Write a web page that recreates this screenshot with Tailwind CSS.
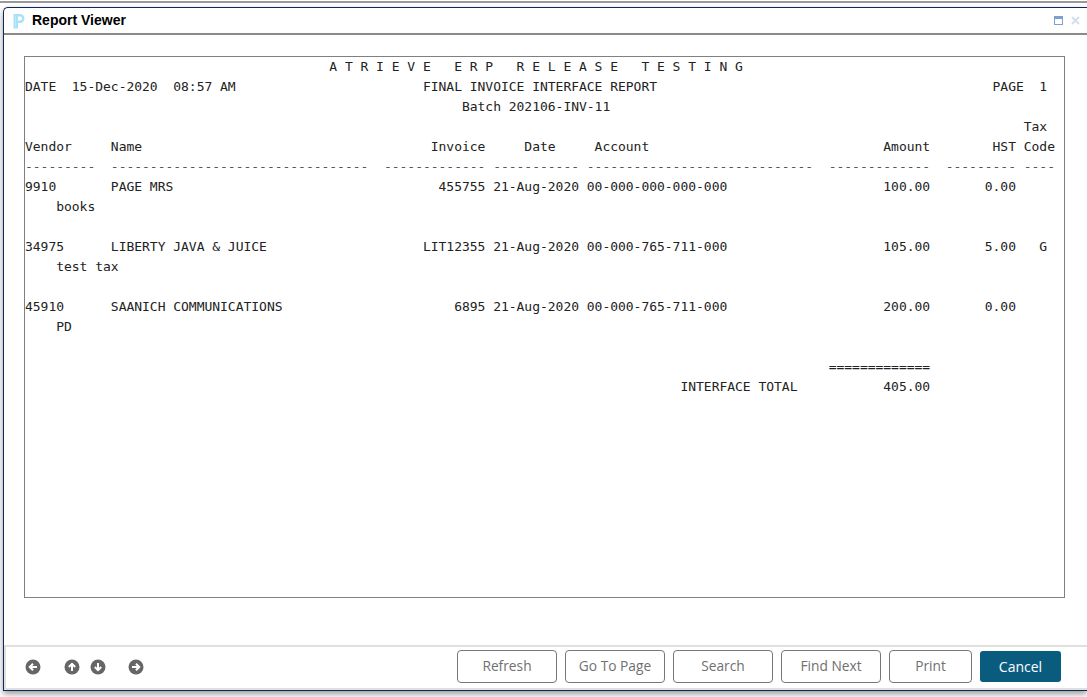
<!DOCTYPE html>
<html lang="en">
  <head>
    <meta charset="UTF-8" />
    <title>Report Viewer</title>
    <script src="https://cdn.jsdelivr.net/npm/@tailwindcss/browser@4"></script>
  </head>
  <body class="bg-white">
    <div class="h-[697px] w-[1087px] overflow-hidden flex flex-col pt-px">
      <div class="h-[2px] bg-[#999999] shrink-0"></div>
      <!-- window -->
      <div class="mt-1 ml-[3px] h-[684px] flex flex-col border-l border-t border-b border-[#0b2a5b] rounded-tl-[5px] shadow-[0_3px_6px_rgba(0,0,0,0.4)] bg-white">
        <!-- title bar -->
        <div class="h-[27px] shrink-0 flex items-center border-b-[2px] border-[#8a8a8a] pl-[9px] pr-[7px]">
          <svg width="12" height="16" viewBox="0 0 12 16" class="shrink-0">
            <path d="M0.5 1h6.5a4.5 4.5 0 0 1 0 9H5v5.5H0.5z" fill="#a6e3fb" />
            <path d="M2.5 3.5v10" stroke="#bdeafc" stroke-width="1" />
            <path d="M5 3.5h2a2 2 0 0 1 0 4H5z" fill="#ffffff" />
          </svg>
          <span class="ml-[7px] text-[14px] font-bold text-black font-['Liberation_Sans',sans-serif]">Report Viewer</span>
          <div class="ml-auto flex items-center gap-2">
            <div class="w-[9px] h-[9px] border border-[#7f9fcf] border-t-[3px]"></div>
            <svg width="9" height="9" viewBox="0 0 9 9"><path d="M1 1l7 7M8 1l-7 7" stroke="#d3dff0" stroke-width="2" /></svg>
          </div>
        </div>
        <!-- report -->
        <div class="flex-1 min-h-0 pt-[21px] pl-[20px] pr-[22px]">
          <div class="h-[542px] border border-[#808080] overflow-hidden">
<pre class="font-['DejaVu_Sans_Mono',monospace] text-[13px] tracking-[-0.024px] leading-[20px] text-[#222222]">                                       A T R I E V E   E R P   R E L E A S E   T E S T I N G
DATE  15-Dec-2020  08:57 AM                        FINAL INVOICE INTERFACE REPORT                                           PAGE  1
                                                        Batch 202106-INV-11
                                                                                                                                Tax
Vendor     Name                                     Invoice     Date     Account                              Amount        HST Code
<span class="text-[#555555]">---------  ---------------------------------  ------------- ----------- -----------------------------  -------------  --------- ----</span>
9910       PAGE MRS                                  455755 21-Aug-2020 00-000-000-000-000                    100.00       0.00
    books

34975      LIBERTY JAVA &amp; JUICE                    LIT12355 21-Aug-2020 00-000-765-711-000                    105.00       5.00   G
    test tax

45910      SAANICH COMMUNICATIONS                      6895 21-Aug-2020 00-000-765-711-000                    200.00       0.00
    PD

                                                                                                       =============
                                                                                    INTERFACE TOTAL           405.00</pre>
          </div>
        </div>
        <!-- footer -->
        <div class="h-[45px] shrink-0 border-t-[2px] border-l-[2px] border-b-[2px] border-[#e0e0e0] flex items-center pl-[19px] pr-[26px] pb-[2px]">
          <div class="flex items-center">
            <svg width="16" height="16" viewBox="0 0 16 16"><circle cx="8" cy="8" r="7.5" fill="#666666" /><path d="M12 8H5M8 4.8L4.8 8 8 11.2" fill="none" stroke="#ffffff" stroke-width="2" /></svg>
            <svg width="16" height="16" viewBox="0 0 16 16" class="ml-[23px]"><circle cx="8" cy="8" r="7.5" fill="#666666" /><path d="M8 12V5M4.8 8L8 4.8 11.2 8" fill="none" stroke="#ffffff" stroke-width="2" /></svg>
            <svg width="16" height="16" viewBox="0 0 16 16" class="ml-[10px]"><circle cx="8" cy="8" r="7.5" fill="#666666" /><path d="M8 4v7M4.8 8L8 11.2 11.2 8" fill="none" stroke="#ffffff" stroke-width="2" /></svg>
            <svg width="16" height="16" viewBox="0 0 16 16" class="ml-[22px]"><circle cx="8" cy="8" r="7.5" fill="#666666" /><path d="M4 8h7M8 4.8L11.2 8 8 11.2" fill="none" stroke="#ffffff" stroke-width="2" /></svg>
          </div>
          <div class="ml-auto flex items-center gap-2 font-['Open_Sans',sans-serif] text-[13.75px] text-[#707070]">
            <button class="w-[100px] h-[33px] bg-white border border-[#777777] rounded-[4px]">Refresh</button>
            <button class="w-[100px] h-[33px] bg-white border border-[#777777] rounded-[4px]">Go To Page</button>
            <button class="w-[100px] h-[33px] bg-white border border-[#777777] rounded-[4px]">Search</button>
            <button class="w-[100px] h-[33px] bg-white border border-[#777777] rounded-[4px]">Find Next</button>
            <button class="w-[83px] h-[33px] bg-white border border-[#777777] rounded-[4px]">Print</button>
            <button class="w-[81px] h-[31px] bg-[#0a5c7f] text-white text-[14px] rounded-[3px]">Cancel</button>
          </div>
        </div>
      </div>
    </div>
  </body>
</html>
